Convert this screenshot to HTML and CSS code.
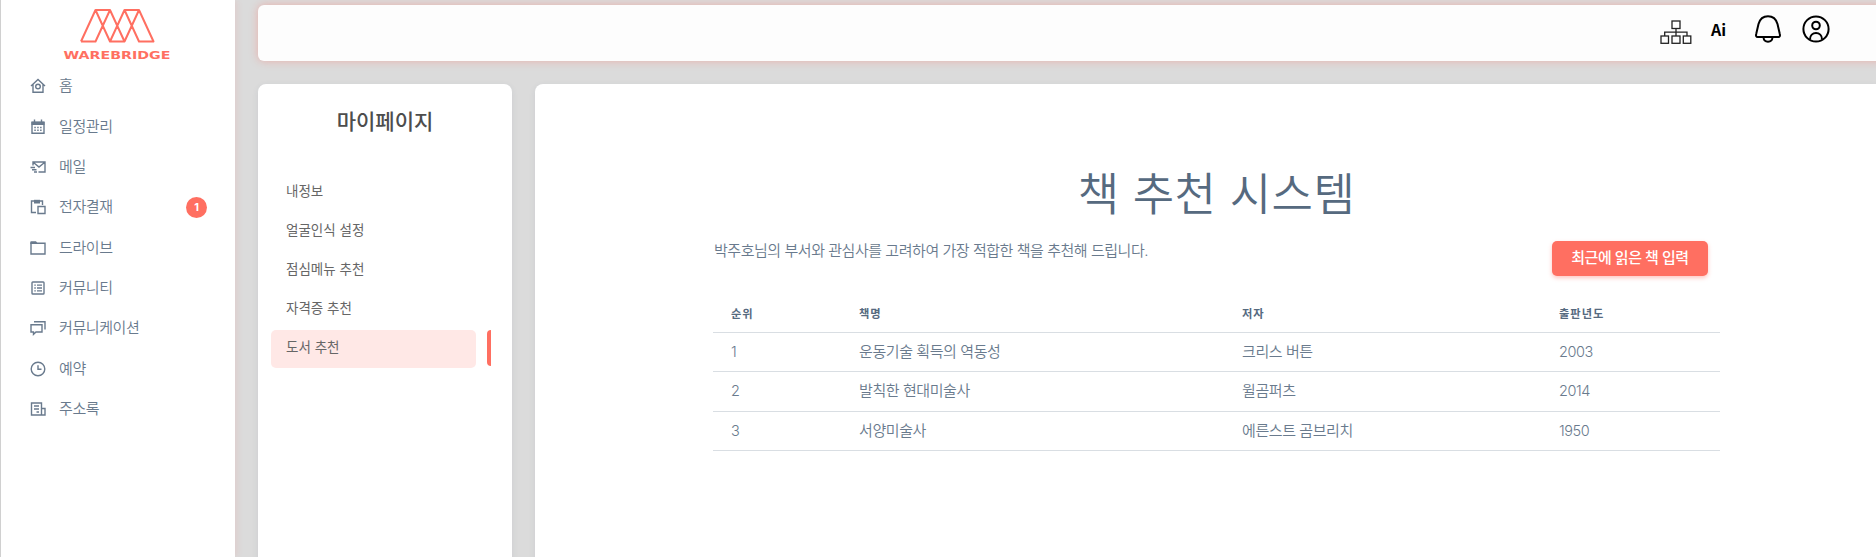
FILE: index.html
```html
<!DOCTYPE html>
<html lang="ko">
<head>
<meta charset="utf-8">
<title>WAREBRIDGE</title>
<link rel="stylesheet" href="styles.css">
</head>
<body>
<div class="layout">
  <aside class="sidebar">
    <a class="brand">
      <svg width="112" height="60" viewBox="-2 0 112 60">
        <path fill="none" stroke="#ff6f61" stroke-width="2" stroke-linejoin="round" d="M17 35.500L31.500 4H46L60.500 35.500H46L31.500 4M17 35.500H31.500L46 4M46 35.500L60.500 4H75L89.500 35.500H75L60.500 4M60.500 35.500L75 4"/>
        <text x="-.5" y="53" class="brand-text" textLength="107" lengthAdjust="spacingAndGlyphs">WAREBRIDGE</text>
      </svg>
    </a>
    <nav class="menu">
      <a class="menu-item"><svg class="icon" viewBox="0 0 16 16"><path d="M1 8 8 1.500 15 8M3 6.500V14.300H13V6.500"/><circle cx="8" cy="8.500" r="2.300"/></svg><span>홈</span></a>
      <a class="menu-item"><svg class="icon" viewBox="0 0 16 16"><path d="M2 3.500H14V14.300H2Z"/><path class="solid" d="M1.500 2.500H14.500V6H1.500Z"/><path d="M4.500 .5V3.500M11.500 .5V3.500"/><path d="M4.300 8.500H12M4.300 11.300H12" stroke-dasharray="1.500 1.400"/></svg><span>일정관리</span></a>
      <a class="menu-item"><svg class="icon" viewBox="0 0 16 16"><path d="M3 6.500V3H15V13H8.500M3.500 3.500 9 8 14.500 3.500M.5 8.500H5M2 10.800H6.500M4 13H7"/></svg><span>메일</span></a>
      <a class="menu-item"><svg class="icon" viewBox="0 0 16 16"><path d="M6 13.500H1.500V2H12.500V6M8 7.500H15V14.500H8Z"/><path class="solid" d="M4 .8H10V4.500H4Z"/></svg><span>전자결재</span><b class="badge">1</b></a>
      <a class="menu-item"><svg class="icon" viewBox="0 0 16 16"><path d="M1 3.300H15V14H1Z"/><path class="solid" d="M.3 2Q.3 1.300 1 1.300H6L8 4H.3Z"/></svg><span>드라이브</span></a>
      <a class="menu-item"><svg class="icon" viewBox="0 0 16 16"><rect x="2" y="2" width="12" height="12" rx=".8"/><path d="M4.300 5.200H5.800M7 5.200H12M4.300 8H5.800M7 8H12M4.300 10.800H5.800M7 10.800H12" stroke-width="1.300"/></svg><span>커뮤니티</span></a>
      <a class="menu-item"><svg class="icon" viewBox="0 0 16 16"><path d="M4 1.800H15V9.500M1 4.800H12V12H6L3.500 14.300V12H1Z"/></svg><span>커뮤니케이션</span></a>
      <a class="menu-item"><svg class="icon" viewBox="0 0 16 16"><circle cx="8" cy="8" r="6.800"/><path d="M8 4.300V8.300H11.500"/></svg><span>예약</span></a>
      <a class="menu-item"><svg class="icon" viewBox="0 0 16 16"><path d="M1.500 2H11.500V14H1.500ZM11.500 7.500H15V14H11.500M4 5H9M4 8H9M6.500 11H9"/></svg><span>주소록</span></a>
    </nav>
  </aside>
  <div class="page">
    <header class="topbar">
      <svg width="32" height="24" viewBox="0 0 32 24" fill="none" stroke="#222" stroke-width="1.300"><rect x="12" y="1" width="8" height="7.500"/><rect x="1" y="16" width="7.500" height="7.300"/><rect x="12" y="16" width="8" height="7.300"/><rect x="23.300" y="16" width="7.500" height="7.300"/><path d="M16 8.500V16M4.700 16V12.200H27V16"/></svg>
      <b class="ai">Ai</b>
      <svg class="bell" width="26" height="28" viewBox="0 0 26 28" fill="none" stroke="#000" stroke-width="2"><path d="M2.800 22C1 22 .8 20.500 1.200 19L3.500 9C5 3.800 8.500 1.300 13 1.300S21 3.800 22.500 9L24.800 19C25.200 20.500 25 22 23.200 22ZM8.500 22.500C9 28 17 28 17.500 22.500"/></svg>
      <svg class="user" width="28" height="28" viewBox="0 0 28 28" fill="none" stroke="#000" stroke-width="2"><circle cx="14" cy="14" r="12.600"/><circle cx="14" cy="10.500" r="3.800"/><path d="M8 24.500C7.500 15.800 20.500 15.800 20 24.500"/></svg>
    </header>
    <div class="panels">
      <section class="mypage">
        <h2 class="mypage-title">마이페이지</h2>
        <ul class="submenu">
          <li class="sub-item">내정보</li>
          <li class="sub-item">얼굴인식 설정</li>
          <li class="sub-item">점심메뉴 추천</li>
          <li class="sub-item">자격증 추천</li>
          <li class="sub-item active">도서 추천</li>
        </ul>
      </section>
      <main class="content">
        <div class="inner">
          <h1 class="title">책 추천 시스템</h1>
          <div class="intro">
            <p class="desc">박주호님의 부서와 관심사를 고려하여 가장 적합한 책을 추천해 드립니다.</p>
            <button class="btn">최근에 읽은 책 입력</button>
          </div>
          <table class="books">
            <colgroup><col class="c1"><col class="c2"><col class="c3"><col></colgroup>
            <thead><tr><th>순위</th><th>책명</th><th>저자</th><th>출판년도</th></tr></thead>
            <tbody>
              <tr><td>1</td><td>운동기술 획득의 역동성</td><td>크리스 버튼</td><td>2003</td></tr>
              <tr><td>2</td><td>발칙한 현대미술사</td><td>윌곰퍼츠</td><td>2014</td></tr>
              <tr><td>3</td><td>서양미술사</td><td>에른스트 곰브리치</td><td>1950</td></tr>
            </tbody>
          </table>
        </div>
      </main>
    </div>
  </div>
</div>
</body>
</html>
```
FILE: styles.css
```css
* { box-sizing: border-box; }
body { margin: 0; height: 557px; overflow: hidden; background: #dbdbdb; color: #697a8d; font-family: Inter, "Noto Sans CJK KR", sans-serif; font-size: 15px; font-weight: 350; }
h1, h2, p, ul { margin: 0; padding: 0; }
.layout { display: flex; height: 557px; }
.sidebar { width: 235px; flex: none; background: #fff; border-left: 1px solid #d0d0d0; box-shadow: 2px 0 6px rgba(255, 111, 97, .12); }
.brand { display: flex; justify-content: center; padding: 6px 0 0; margin-right: 1px; height: 66px; }
.brand-text { font-family: "DejaVu Sans", sans-serif; font-weight: bold; font-size: 11px; fill: #ff6f61; }
.menu { display: flex; flex-direction: column; }
.menu-item { display: flex; align-items: center; height: 40.375px; padding: 0 28px 0 29px; letter-spacing: -.42px; line-height: 20px; }
.icon { width: 16px; height: 16px; margin-right: 13px; fill: none; stroke: #697a8d; stroke-width: 1.4; }
.icon .solid { fill: #697a8d; stroke: none; }
.badge { margin-left: auto; width: 21px; height: 21px; border-radius: 50%; background: #ff6f61; color: #fff; font-size: 11px; font-weight: 700; line-height: 21px; text-align: center; letter-spacing: 0; }
.page { flex: 1; min-width: 0; padding: 5px 0 0 23px; overflow: hidden; }
.topbar { display: flex; align-items: flex-start; height: 56px; margin-right: -20px; padding: 0 66px 0 0; justify-content: flex-end; background: #fdfdfd; border-radius: 6px 0 0 6px; box-shadow: 0 0 8px rgba(255, 111, 97, .4); }
.topbar > svg:first-child { margin-top: 15px; margin-right: -1px; }
.ai { width: 18px; margin: 13px 26px 0 20px; color: #000; font: bold 16px/22px "Noto Sans CJK KR", sans-serif; }
.bell { margin-top: 10px; margin-right: 21px; }
.user { margin-top: 10px; }
.panels { display: flex; gap: 23px; margin-top: 23px; height: 500px; }
.mypage { width: 254px; flex: none; background: #fff; border-radius: 8px; box-shadow: 0 2px 6px rgba(67, 89, 113, .1); }
.mypage-title { padding-top: 23px; line-height: 30px; font-size: 21px; font-weight: 500; color: #4d4d4d; text-align: center; letter-spacing: 0; }
.submenu { list-style: none; margin-top: 37px; padding-left: 13px; }
.sub-item { width: 205px; height: 38px; margin-bottom: 1.1px; padding-left: 15px; border-radius: 5px; font-size: 13.5px; font-weight: 400; line-height: 35px; color: #666; }
.active { position: relative; background: #ffe8e6; }
.active::after { content: ""; position: absolute; left: 216px; top: 0; width: 4px; height: 36px; border-radius: 4px 0 0 4px; background: #ff6f61; }
.content { flex: 1; background: #fff; border-radius: 8px 0 0 0; box-shadow: 0 2px 6px rgba(67, 89, 113, .1); }
.inner { width: 1007px; margin-left: 178px; padding-top: 76px; }
.title { height: 70px; font-size: 45px; line-height: 70px; font-weight: 350; color: #566a7f; text-align: center; letter-spacing: .5px; }
.intro { display: flex; justify-content: space-between; align-items: flex-start; padding: 11px 12px 0 0; height: 64px; }
.desc { padding-left: 1px; line-height: 20px; letter-spacing: -.46px; }
.btn { width: 156px; height: 35px; border: 0; border-radius: 5px; background: #ff6f61; color: #fff; font: 500 15px/20px Inter, "Noto Sans CJK KR", sans-serif; letter-spacing: -.45px; padding: 0 0 2px; box-shadow: 0 2px 4px rgba(255, 111, 97, .4); }
.books { width: 1007px; border-collapse: collapse; table-layout: fixed; }
.c1 { width: 128px; } .c2 { width: 383px; } .c3 { width: 317px; }
.books th, .books td { padding: 0 18px; text-align: left; border-bottom: 1px solid #d9dee3; }
.books th { height: 38px; padding-top: 1px; font-size: 11.25px; font-weight: 700; color: #566a7f; letter-spacing: 1px; }
.books td { height: 39.5px; line-height: 20px; letter-spacing: -.42px; }
.books td:first-child, .books td:last-child { font-size: 14.5px; }
```
